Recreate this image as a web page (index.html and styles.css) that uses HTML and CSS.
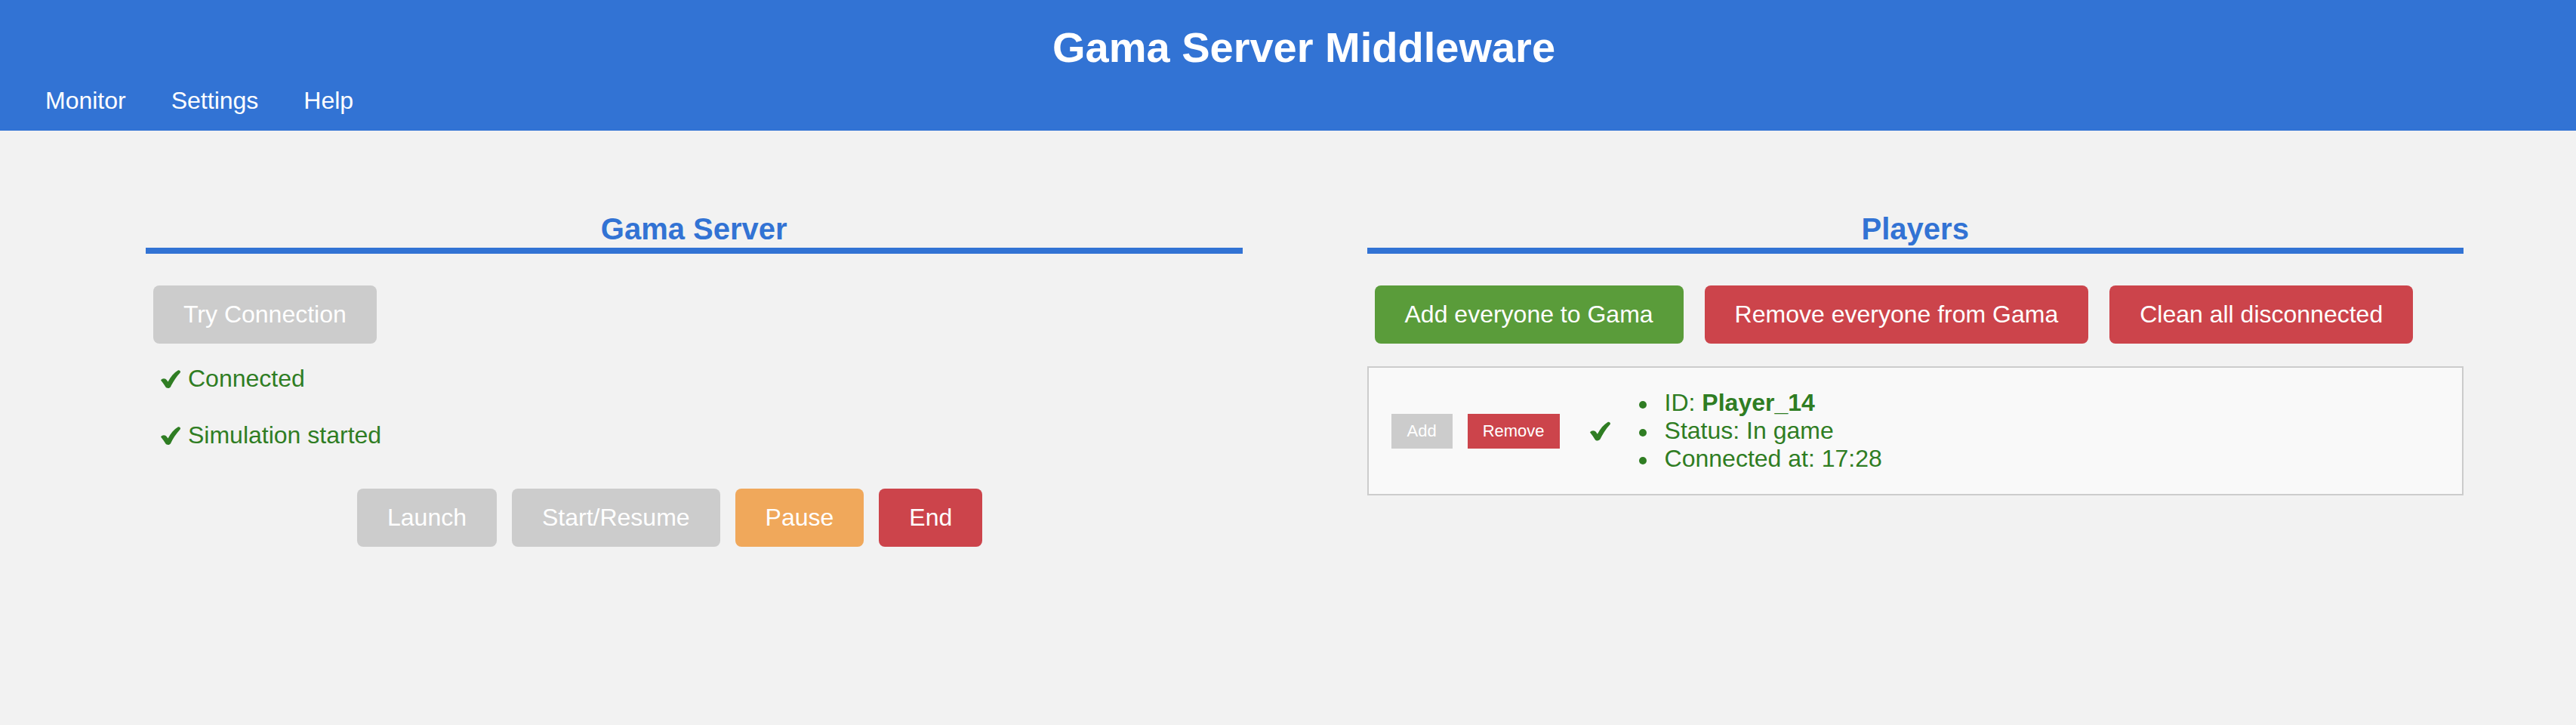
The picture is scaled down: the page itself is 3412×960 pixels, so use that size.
FILE: index.html
```html
<!DOCTYPE html>
<html lang="en">
<head>
<meta charset="utf-8">
<title>Gama Server Middleware</title>
<link rel="stylesheet" href="styles.css">
</head>
<body>
<header class="topbar">
  <h1 class="title">Gama Server Middleware</h1>
  <nav class="nav">
    <a class="nav-link" href="#">Monitor</a>
    <a class="nav-link" href="#">Settings</a>
    <a class="nav-link" href="#">Help</a>
  </nav>
</header>
<main class="columns">
  <section class="column">
    <h2 class="col-title">Gama Server</h2>
    <div class="btn-row">
      <button class="btn btn-gray">Try Connection</button>
    </div>
    <p class="status status-first"><svg class="check" viewBox="0 0 26 24"><path d="M0,13.5 C2,10.5 6,10.5 8,13.5 L9.5,15.5 C13,9 17.5,3.5 23,0.3 C25,-0.5 26.8,1.8 25.6,3.4 C20,9.5 16,16 13,22.2 C11.8,24.4 7.8,24.6 6.4,22.5 C4.6,19.5 2.5,16.5 0,13.5 Z"/></svg>Connected</p>
    <p class="status"><svg class="check" viewBox="0 0 26 24"><path d="M0,13.5 C2,10.5 6,10.5 8,13.5 L9.5,15.5 C13,9 17.5,3.5 23,0.3 C25,-0.5 26.8,1.8 25.6,3.4 C20,9.5 16,16 13,22.2 C11.8,24.4 7.8,24.6 6.4,22.5 C4.6,19.5 2.5,16.5 0,13.5 Z"/></svg>Simulation started</p>
    <div class="sim-row">
      <button class="btn btn-gray">Launch</button>
      <button class="btn btn-gray">Start/Resume</button>
      <button class="btn btn-orange">Pause</button>
      <button class="btn btn-red">End</button>
    </div>
  </section>
  <section class="column">
    <h2 class="col-title">Players</h2>
    <div class="btn-row players-actions">
      <button class="btn btn-green">Add everyone to Gama</button>
      <button class="btn btn-red">Remove everyone from Gama</button>
      <button class="btn btn-red">Clean all disconnected</button>
    </div>
    <div class="player-card">
      <button class="small-btn small-gray">Add</button>
      <button class="small-btn small-red">Remove</button>
      <svg class="check card-check" viewBox="0 0 26 24"><path d="M0,13.5 C2,10.5 6,10.5 8,13.5 L9.5,15.5 C13,9 17.5,3.5 23,0.3 C25,-0.5 26.8,1.8 25.6,3.4 C20,9.5 16,16 13,22.2 C11.8,24.4 7.8,24.6 6.4,22.5 C4.6,19.5 2.5,16.5 0,13.5 Z"/></svg>
      <ul class="player-info">
        <li>ID: <strong>Player_14</strong></li>
        <li>Status: In game</li>
        <li>Connected at: 17:28</li>
      </ul>
    </div>
  </section>
</main>
</body>
</html>
```
FILE: styles.css
```css
html, body {
  margin: 0;
  padding: 0;
}
body {
  background: #f2f2f2;
  font-family: "Liberation Sans", Arial, Helvetica, sans-serif;
  font-size: 32px;
  color: #222;
  width: 3412px;
  height: 960px;
  overflow: hidden;
}
.topbar {
  background: #3273d4;
  color: #fff;
  padding: 30px 0 21px;
}
.title {
  margin: 0 0 20px;
  padding-left: 42px;
  font-size: 56px;
  font-weight: bold;
  text-align: center;
  line-height: normal;
}
.nav {
  display: flex;
  gap: 60px;
  padding-left: 60px;
}
.nav-link {
  color: #fff;
  text-decoration: none;
  font-size: 32px;
}
.columns {
  display: flex;
  gap: 165px;
  padding: 0 149px 0 193px;
}
.column {
  flex: 1 1 0;
  min-width: 0;
}
.col-title {
  margin: 108px 0 0;
  padding-bottom: 2px;
  border-bottom: 8px solid #3273d4;
  color: #3273d4;
  font-size: 40px;
  font-weight: bold;
  text-align: center;
  line-height: normal;
}
.btn-row {
  display: flex;
  margin-top: 42px;
  padding-left: 10px;
}
.players-actions {
  gap: 28px;
}
.btn {
  font-family: inherit;
  font-size: 32px;
  line-height: normal;
  color: #fff;
  border: none;
  border-radius: 8px;
  padding: 20px 40px;
  margin: 0;
  cursor: pointer;
}
.btn-gray { background: #cccccc; }
.btn-green { background: #5a9c3a; }
.btn-red { background: #cc444b; }
.btn-orange { background: #f0a85b; }
.status {
  display: flex;
  align-items: center;
  margin: 38px 0 0;
  padding-left: 20px;
  color: #2f7d23;
  line-height: normal;
}
.status-first {
  margin-top: 28px;
}
.check {
  width: 26px;
  height: 24px;
  fill: #2f7d23;
  margin-right: 10px;
  flex: none;
}
.sim-row {
  display: flex;
  gap: 20px;
  margin-top: 52px;
  padding-left: 280px;
}
.player-card {
  display: flex;
  align-items: center;
  margin-top: 30px;
  padding: 28px 30px;
  background: #f9f9f9;
  border: 2px solid #cccccc;
}
.small-btn {
  font-family: inherit;
  font-size: 22px;
  line-height: normal;
  color: #fff;
  border: none;
  border-radius: 0;
  padding: 10px 21px;
  margin: 0;
}
.small-gray { background: #cccccc; }
.small-red {
  background: #cc444b;
  margin-left: 20px;
  padding: 10px 20px;
}
.card-check {
  width: 27px;
  height: 26px;
  margin: 0 0 0 40px;
}
.player-info {
  margin: 0 0 0 38px;
  padding: 0;
  list-style: none;
  color: #2f7d23;
  line-height: normal;
}
.player-info li::before {
  content: "";
  display: inline-block;
  width: 10px;
  height: 10px;
  border-radius: 50%;
  background: #2f7d23;
  margin-right: 24px;
  vertical-align: middle;
}
.player-info strong {
  font-weight: bold;
}
```
